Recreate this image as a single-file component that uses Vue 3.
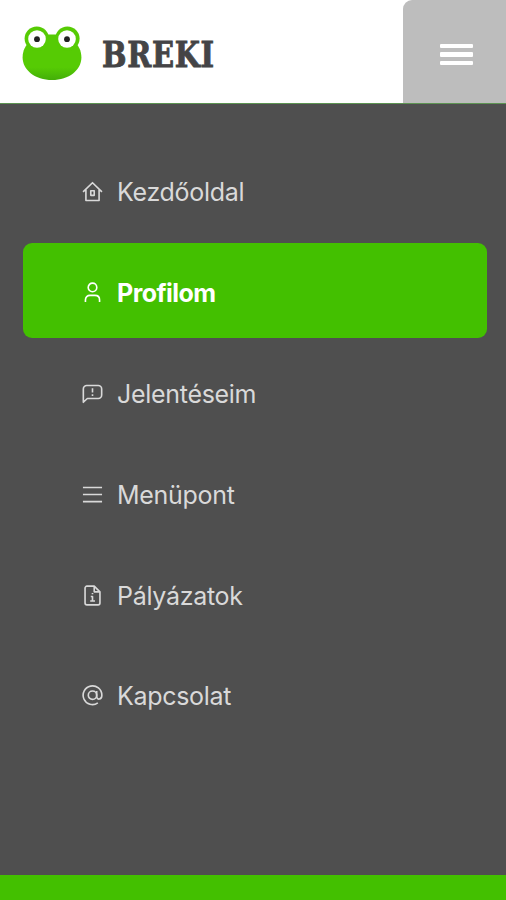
<script setup>
const items = [
  { label: 'Kezdőoldal', icon: 'home' },
  { label: 'Profilom', icon: 'user', active: true },
  { label: 'Jelentéseim', icon: 'report' },
  { label: 'Menüpont', icon: 'menu' },
  { label: 'Pályázatok', icon: 'file' },
  { label: 'Kapcsolat', icon: 'at' },
]
</script>

<template>
  <div class="page">
    <header class="header">
      <div class="brand">
        <svg class="frog" width="60" height="56" viewBox="0 0 60 56">
          <defs>
            <linearGradient id="skin" x1="0" y1="0" x2="0" y2="1">
              <stop offset="0.72" stop-color="#56cb04" />
              <stop offset="1" stop-color="#43ae08" />
            </linearGradient>
          </defs>
          <path d="M30 9.5C48 9.5 59.4 19 59.4 32.5 59.4 45 47 55 30 55S.6 45 .6 32.5C.6 19 12 9.5 30 9.5z" fill="url(#skin)" />
          <circle cx="14.8" cy="13.6" r="12.2" fill="#56cb04" />
          <circle cx="45.4" cy="13.6" r="12.2" fill="#56cb04" />
          <circle cx="15" cy="14" r="8.8" fill="#fff" />
          <circle cx="45" cy="14" r="8.8" fill="#fff" />
          <circle cx="15" cy="14.2" r="2.9" fill="#222" />
          <circle cx="45" cy="14.2" r="2.9" fill="#222" />
        </svg>
        <span class="wordmark">BREKI</span>
      </div>
      <button class="toggle" aria-label="Menü">
        <span></span><span></span><span></span>
      </button>
    </header>

    <nav class="nav">
      <a v-for="item in items" :key="item.label" class="item" :class="{ active: item.active }">
        <svg class="icon" viewBox="0 0 22 22">
          <g v-if="item.icon === 'home'">
            <path d="M1.1 11.4 11 1.8l9.9 9.6M4.1 9.2v11.2h13.8V9.2" />
            <path d="M9.2 10.2h3.6v4.8H9.2z" />
          </g>
          <g v-else-if="item.icon === 'user'">
            <circle cx="11" cy="5.7" r="4.5" />
            <path d="M3.6 21v-2.2c0-3 2-4.8 4.8-4.8h5.2c2.8 0 4.8 1.8 4.8 4.8V21" />
          </g>
          <g v-else-if="item.icon === 'report'">
            <path d="M1.4 20.2V6.2A3.6 3.6 0 0 1 5 2.6h12a3.6 3.6 0 0 1 3.6 3.6v6.4a3.6 3.6 0 0 1-3.6 3.6H5.6z" />
            <path d="M11 5.6v4.4M11 11.7v1.8" />
          </g>
          <g v-else-if="item.icon === 'menu'">
            <path d="M1 3.6h20M1 11h20M1 18.4h20" />
          </g>
          <g v-else-if="item.icon === 'file'">
            <path d="M12.8 1.2H5.2a2 2 0 0 0-2 2v15.6a2 2 0 0 0 2 2h11.6a2 2 0 0 0 2-2V7.2z" />
            <path d="M12.8 1.2v6h6M9.2 12H11v4.8M8.6 16.8h5M11 8.3v1.5" />
          </g>
          <g v-else>
            <circle cx="11" cy="10.7" r="4.4" />
            <path d="M15.4 6.3v5.5c0 4.2 5.4 4 5.4-1.1A9.8 9.8 0 1 0 16.6 18.8" />
          </g>
        </svg>
        <span class="label">{{ item.label }}</span>
      </a>
    </nav>

    <footer class="footer"></footer>
  </div>
</template>

<style>
body {
  margin: 0;
}
</style>

<style scoped>
.page {
  display: flex;
  flex-direction: column;
  height: 900px;
  background: #4f4f4f;
  font-family: Inter, sans-serif;
}
.header {
  display: flex;
  justify-content: space-between;
  box-sizing: border-box;
  height: 104px;
  background: #fff;
  border-bottom: 1px solid #5d9452;
}
.brand {
  display: flex;
  align-items: flex-start;
  padding: 25px 0 0 22px;
}
.wordmark {
  margin: 5px 0 0 19.5px;
  font: bold 34.5px/50px 'DejaVu Serif', serif;
  letter-spacing: 0.8px;
  color: #444446;
  -webkit-text-stroke: 0.9px #444446;
  transform: scaleX(0.84);
  transform-origin: left center;
}
.toggle {
  display: flex;
  flex-direction: column;
  align-items: center;
  gap: 4px;
  width: 103px;
  height: 103px;
  padding: 44px 0 0 3px;
  border: 0;
  border-radius: 9px 0 0 0;
  background: #bdbdbd;
  box-sizing: border-box;
}
.toggle span {
  width: 33px;
  height: 4.4px;
  border-radius: 1px;
  background: #fff;
}
.nav {
  display: flex;
  flex: 1;
  flex-direction: column;
  gap: 5.8px;
  padding: 38.4px 19px 0 22.5px;
}
.item {
  display: flex;
  align-items: center;
  box-sizing: border-box;
  height: 95px;
  padding: 4px 0 0 59.5px;
  border-radius: 9px;
  color: #d9d9d9;
  font-size: 25px;
  line-height: 30px;
  letter-spacing: -0.3px;
}
.active {
  background: #43c000;
  color: #fff;
  font-weight: 700;
  letter-spacing: -0.55px;
}
.icon {
  width: 21px;
  height: 21px;
  margin: 0 14px 0 0;
  fill: none;
  stroke: currentColor;
  stroke-width: 1.7;
  stroke-linejoin: round;
}
.label {
  padding-top: 1px;
}
.footer {
  height: 25px;
  background: #43c000;
}
</style>
